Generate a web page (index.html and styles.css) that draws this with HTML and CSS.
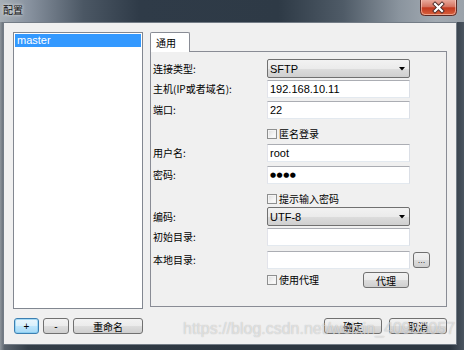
FILE: index.html
```html
<!DOCTYPE html>
<html>
<head>
<meta charset="utf-8">
<link rel="stylesheet" href="styles.css">
</head>
<body>
<div class="window">
  <div class="titlebar">
    <span class="title">配置</span>
    <div class="close">
      <svg width="37" height="16" viewBox="0 0 37 16">
        <defs>
          <linearGradient id="cg" x1="0" y1="0" x2="0" y2="1">
            <stop offset="0" stop-color="#e9a99c"/>
            <stop offset="0.45" stop-color="#d4715e"/>
            <stop offset="0.5" stop-color="#c2381f"/>
            <stop offset="1" stop-color="#d8643f"/>
          </linearGradient>
        </defs>
        <path d="M0.5 0 V11.5 Q0.5 15.5 4.5 15.5 H32.5 Q36.5 15.5 36.5 11.5 V0" fill="url(#cg)" stroke="#5a2a26" stroke-width="1"/>
        <path d="M1.5 0 V11 Q1.5 14.5 5 14.5 H32 Q35.5 14.5 35.5 11 V0" fill="none" stroke="rgba(255,220,210,0.55)" stroke-width="1"/>
        <path d="M15 4 L22 11 M22 4 L15 11" stroke="#4a2a28" stroke-width="4" stroke-linecap="square"/>
        <path d="M15 4 L22 11 M22 4 L15 11" stroke="#ffffff" stroke-width="2.2" stroke-linecap="square"/>
      </svg>
    </div>
  </div>
  <div class="client">
    <div class="leftcol">
      <div class="list">
        <div class="item selected">master</div>
      </div>
      <div class="btnrow left-btns">
        <button class="btn default w-plus">+</button>
        <button class="btn w-minus">-</button>
        <button class="btn w-rename">重命名</button>
      </div>
    </div>
    <div class="rightcol">
      <div class="tabs">
        <div class="tab">通用</div>
      </div>
      <div class="panel">
        <div class="form">
          <div class="label h19">连接类型:</div>
          <div class="select"><span class="val">SFTP</span><svg class="arrow" width="6" height="4" viewBox="0 0 6 4"><path d="M0 0 H6 L3 3.5 Z" fill="#000"/></svg></div>
          <div></div>

          <div class="label h18">主机(IP或者域名):</div>
          <div class="input">192.168.10.11</div>
          <div></div>

          <div class="label h18">端口:</div>
          <div class="input">22</div>
          <div></div>

          <div></div>
          <div class="cb pad5"><span class="box"></span><span>匿名登录</span></div>
          <div></div>

          <div class="label h18">用户名:</div>
          <div class="input">root</div>
          <div></div>

          <div class="label h18">密码:</div>
          <div class="input pwd">●●●●</div>
          <div></div>

          <div></div>
          <div class="cb pad5"><span class="box"></span><span>提示输入密码</span></div>
          <div></div>

          <div class="label h19">编码:</div>
          <div class="select"><span class="val">UTF-8</span><svg class="arrow" width="6" height="4" viewBox="0 0 6 4"><path d="M0 0 H6 L3 3.5 Z" fill="#000"/></svg></div>
          <div></div>

          <div class="label h18">初始目录:</div>
          <div class="input"></div>
          <div></div>

          <div class="label h18">本地目录:</div>
          <div class="input"></div>
          <button class="btn dots">...</button>

          <div></div>
          <div class="proxyrow">
            <div class="cb"><span class="box"></span><span>使用代理</span></div>
            <button class="btn w-proxy">代理</button>
          </div>
          <div></div>
        </div>
      </div>
      <div class="btnrow right-btns">
        <button class="btn w-ok">确定</button>
        <button class="btn w-ok">取消</button>
      </div>
    </div>
  </div>
  <div class="watermark">https://blog.csdn.net/weixin_40983057</div>
</div>
</body>
</html>
```
FILE: styles.css
```css
* { box-sizing: border-box; }
body {
  margin: 0;
  font-family: "Noto Sans CJK SC", "Liberation Sans", sans-serif;
  font-size: 10px;
}
.window {
  position: relative;
  width: 464px;
  height: 350px;
  display: flex;
  flex-direction: column;
  background: linear-gradient(to right, #8e959c 0, #59626c 1%, #343e48 6%, #2c3640 50%, #2c3640 97%, #4b5560 100%);
  overflow: hidden;
}
.titlebar {
  height: 22px;
  display: flex;
  justify-content: space-between;
  align-items: flex-start;
  background: linear-gradient(to right, #a7afb6 0, #8993a0 6%, #4b5764 18%, #2f3b48 30%, #2e3a46 60%, #4f5b67 74%, #8a949e 86%, #a2aab2 94%, #9aa2aa 100%);
}
.title {
  margin: 3px 0 0 3px;
  font-size: 10px;
  line-height: 13px;
  color: #111;
  text-shadow: 0 0 3px rgba(255,255,255,0.7), 0 0 5px rgba(255,255,255,0.5);
}
.close {
  width: 37px;
  height: 16px;
  margin-right: 7px;
}
.close svg { display: block; }
.client {
  height: 323px;
  margin: 0 7px 0 3px;
  border: 1px solid #737c86;
  background: #f0f0f0;
  display: flex;
  padding: 9px 9px 0 9px;
}
.leftcol {
  width: 130px;
  display: flex;
  flex-direction: column;
}
.list {
  height: 277px;
  border: 1px solid #828790;
  background: #fff;
  padding: 1px;
}
.item {
  height: 13px;
  font-family: "Liberation Sans", sans-serif;
  font-size: 11px;
  line-height: 13px;
  padding-left: 2px;
}
.item.selected {
  background: #3399ff;
  color: #fff;
}
.btnrow {
  display: flex;
  gap: 4px;
  margin-top: 9px;
}
.left-btns { padding-left: 1px; }
.btn {
  height: 16px;
  padding: 0;
  border: 1px solid #707070;
  border-radius: 3px;
  background: linear-gradient(#f2f2f2 0, #ebebeb 50%, #dddddd 51%, #cfcfcf 100%);
  font-family: "Noto Sans CJK SC", "Liberation Sans", sans-serif;
  font-size: 10px;
  line-height: 13px;
  color: #000;
  text-align: center;
}
.btn.default {
  border-color: #3c7fb1;
  background: linear-gradient(#eaf6fd 0, #d9f0fc 50%, #bee6fd 51%, #a7d9f5 100%);
  box-shadow: inset 0 0 0 1px rgba(120,200,240,0.6);
}
.w-plus { width: 25px; font-family: "Liberation Sans", sans-serif; }
.w-minus { width: 26px; font-family: "Liberation Sans", sans-serif; }
.w-rename { width: 70px; }
.rightcol {
  width: 297px;
  margin-left: 7px;
  display: flex;
  flex-direction: column;
}
.tabs {
  display: flex;
  height: 20px;
  margin-bottom: -1px;
  position: relative;
  z-index: 1;
}
.tab {
  width: 40px;
  height: 20px;
  border: 1px solid #898c95;
  border-bottom: none;
  border-radius: 2px 2px 0 0;
  background: #fff;
  padding: 3px 0 0 5px;
  font-size: 10px;
  line-height: 13px;
}
.panel {
  height: 256px;
  border: 1px solid #898c95;
  background: #f0f0f0;
  padding: 7px 0 0 2px;
}
.form {
  display: grid;
  grid-template-columns: 114px 143px 20px;
  grid-template-rows: 21px 21px 22px 21px 22px 22px 19px 21px 23px 20px 18px;
}
.label {
  font-size: 10px;
  color: #000;
  white-space: nowrap;
}
.h18 { line-height: 18px; }
.h19 { line-height: 19px; }
.select {
  height: 19px;
  border: 1px solid #707070;
  border-radius: 2px;
  background: linear-gradient(#f2f2f2 0, #ebebeb 50%, #dddddd 51%, #cfcfcf 100%);
  display: flex;
  align-items: center;
  justify-content: space-between;
  padding: 0 4px 0 2px;
  font-family: "Liberation Sans", sans-serif;
  font-size: 11px;
}
.arrow { display: block; }
.input {
  height: 18px;
  border: 1px solid;
  border-color: #abadb3 #dbdfe6 #e3e9ef #e2e3ea;
  background: #fff;
  padding-left: 2px;
  font-family: "Liberation Sans", sans-serif;
  font-size: 11px;
  line-height: 16px;
  color: #000;
}
.pwd {
  font-family: "DejaVu Sans", sans-serif;
  font-size: 7px;
  letter-spacing: 0.5px;
  line-height: 16px;
}
.cb {
  display: flex;
  align-items: center;
  gap: 2px;
  height: 12px;
  font-size: 10px;
  line-height: 12px;
}
.pad5 { margin-top: 5px; }
.box {
  width: 10px;
  height: 10px;
  border: 1px solid #8e8f8f;
  background: linear-gradient(135deg, #dcdcdc 0, #f4f4f4 60%, #ffffff 100%);
  box-shadow: inset 0 0 0 1px #f4f4f4;
}
.dots {
  width: 17px;
  height: 16px;
  margin: 1px 0 0 3px;
  font-family: "Liberation Sans", sans-serif;
  font-size: 9px;
  line-height: 10px;
  color: #333;
}
.proxyrow {
  display: flex;
  justify-content: space-between;
  align-items: center;
  height: 18px;
  padding-right: 1px;
}
.w-proxy { width: 46px; }
.right-btns {
  margin-top: 11px;
  justify-content: flex-end;
  gap: 7px;
}
.w-ok { width: 58px; }
.watermark {
  position: absolute;
  left: 183px;
  top: 321px;
  font-family: "Liberation Sans", sans-serif;
  font-size: 16px;
  line-height: 16px;
  color: rgba(255,255,255,0.55);
  text-shadow: 0 0 1px rgba(0,0,0,0.28);
  white-space: nowrap;
  pointer-events: none;
}
```
